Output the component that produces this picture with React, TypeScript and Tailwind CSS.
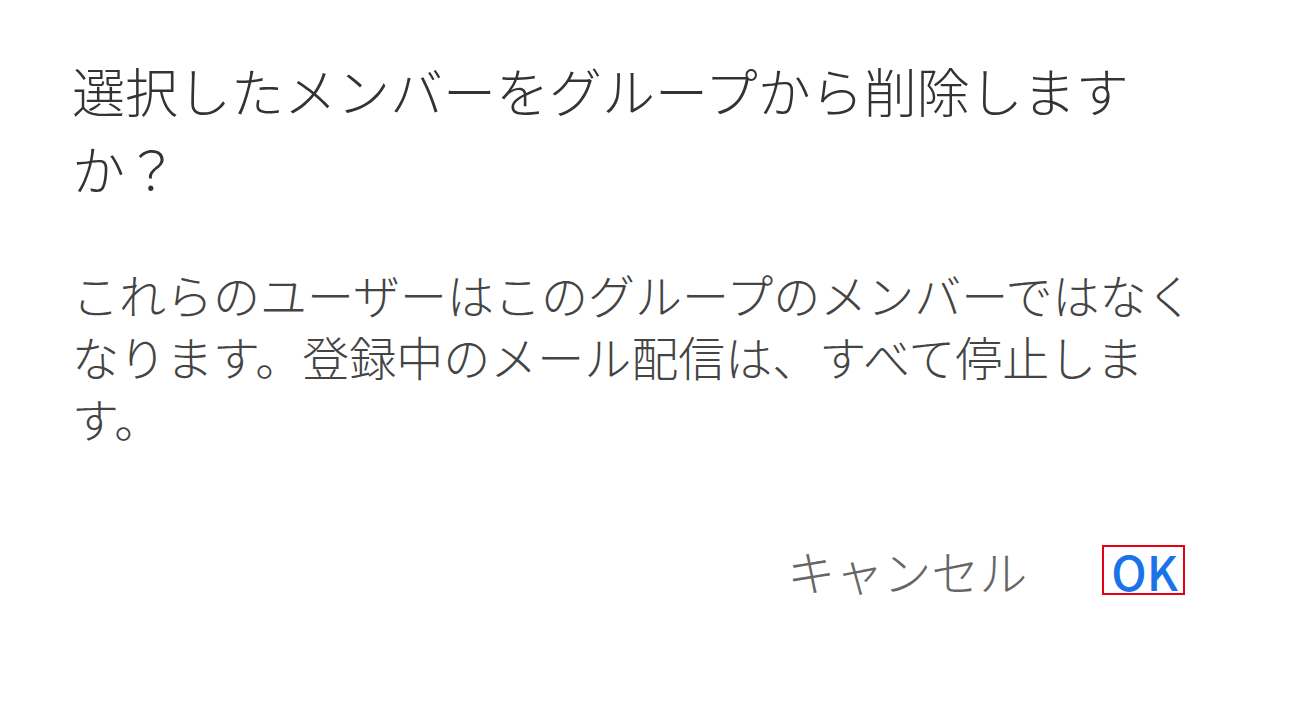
export default function App() {
  return (
    <div className="w-[1301px] h-[701px] bg-white overflow-hidden font-['Noto_Sans_CJK_JP',sans-serif]">
      <div className="w-[1140px] pl-[72px] pt-[51px] box-content">
        {/* Title */}
        <h1 className="text-[53px] leading-[78px] text-[#333333] font-light">
          選択したメンバーをグループから削除しますか？
        </h1>

        {/* Body */}
        <p className="mt-[56px] text-[47px] leading-[62px] text-[#444444] font-light">
          これらのユーザーはこのグループのメンバーではなくなります。登録中のメール配信は、すべて停止します。
        </p>

        {/* Actions */}
        <div className="mt-[96px] flex items-center justify-end gap-[75px] pr-[27px]">
          <button className="text-[48px] leading-[50px] text-[#666666] font-light">キャンセル</button>
          <button className="border-2 border-[#e60012] pl-[7px] pr-[5px] h-[50px] flex items-center text-[47px] leading-none font-medium text-[#1a73e8]">
            OK
          </button>
        </div>
      </div>
    </div>
  );
}
